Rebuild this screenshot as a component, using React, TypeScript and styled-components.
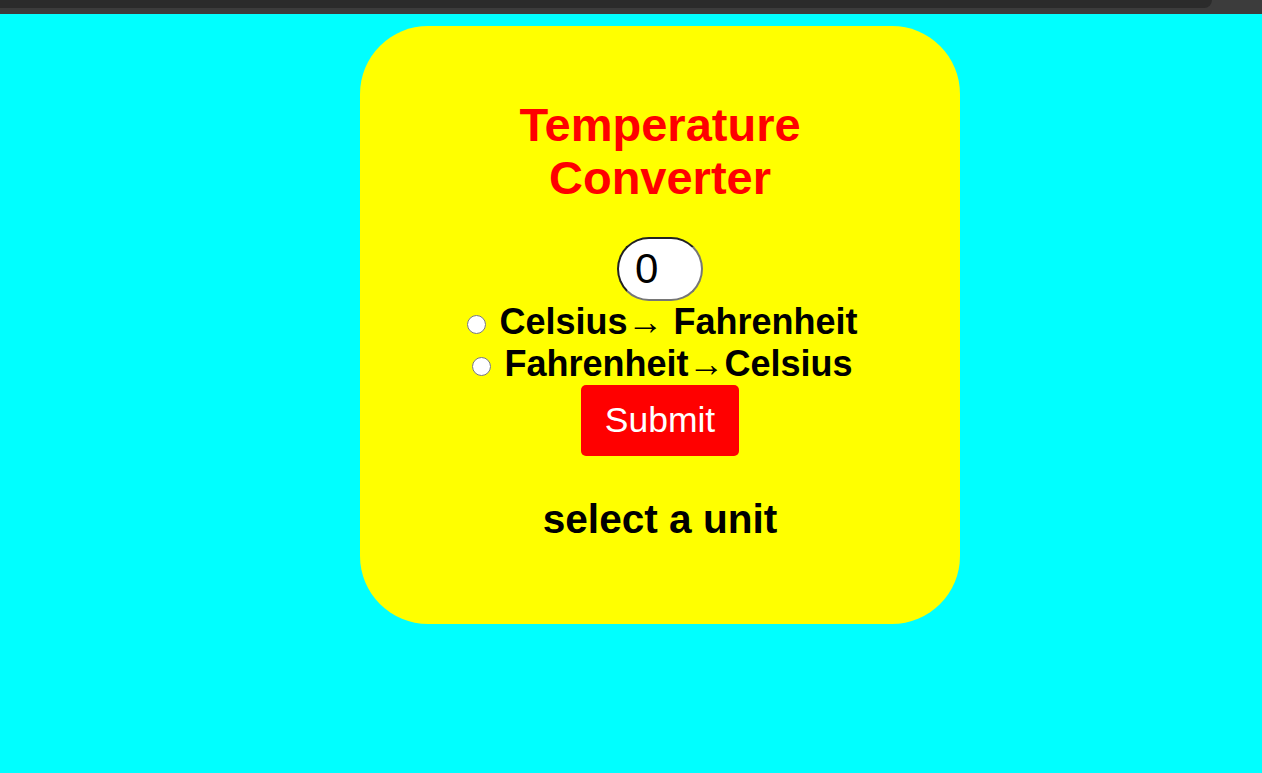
import React, { useState } from "react";
import styled, { createGlobalStyle } from "styled-components";

const GlobalStyle = createGlobalStyle`
  html, body {
    margin: 0;
    padding: 0;
    background: #00ffff;
    font-family: "Liberation Sans", Arial, sans-serif;
  }
`;

export default function App() {
  const [value, setValue] = useState("0");
  const [unit, setUnit] = useState("");

  return (
    <>
      <GlobalStyle />
      <Chrome>
        <ChromeTab />
      </Chrome>
      <Page>
        <Card>
          <Title>Temperature Converter</Title>
          <NumberInput
            type="text"
            value={value}
            onChange={(e) => setValue(e.target.value)}
          />
          <Option>
            <Radio
              type="radio"
              name="unit"
              checked={unit === "cf"}
              onChange={() => setUnit("cf")}
            />{" "}
            Celsius→ Fahrenheit
          </Option>
          <Option>
            <Radio
              type="radio"
              name="unit"
              checked={unit === "fc"}
              onChange={() => setUnit("fc")}
            />{" "}
            Fahrenheit→Celsius
          </Option>
          <SubmitButton type="button">Submit</SubmitButton>
          <Result>select a unit</Result>
        </Card>
      </Page>
    </>
  );
}

const Chrome = styled.div`
  height: 14px;
  background: #3c3c3c;
`;

const ChromeTab = styled.div`
  width: 1212px;
  height: 8px;
  background: #2b2b2b;
  border-bottom-right-radius: 10px;
`;

const Page = styled.main`
  min-height: 759px;
  padding: 12px 0 0 58px;
  box-sizing: border-box;
  display: flex;
  justify-content: center;
  align-items: flex-start;
`;

const Card = styled.section`
  width: 600px;
  padding: 72px 0 82px;
  box-sizing: border-box;
  background: #ffff00;
  border-radius: 68px;
  display: flex;
  flex-direction: column;
  align-items: center;
`;

const Title = styled.h1`
  width: 320px;
  margin: 0 0 33px;
  color: #ff0000;
  font-size: 47px;
  line-height: 53px;
  font-weight: bold;
  text-align: center;
`;

const NumberInput = styled.input`
  width: 86px;
  height: 64px;
  box-sizing: border-box;
  padding: 0 16px;
  border: 2px inset #767676;
  border-radius: 32px;
  background: #ffffff;
  color: #000000;
  font-family: "Liberation Sans", Arial, sans-serif;
  font-size: 42px;
  outline: none;
`;

const Option = styled.label`
  display: block;
  font-size: 36px;
  line-height: 41.5px;
  font-weight: bold;
  color: #000000;
  white-space: nowrap;
`;

const Radio = styled.input`
  width: 19px;
  height: 19px;
  margin: 3px 3px 0 5px;
`;

const SubmitButton = styled.button`
  margin-top: 1px;
  padding: 15px 24px;
  border: none;
  border-radius: 5px;
  background: #ff0000;
  color: #ffffff;
  font-family: "Liberation Sans", Arial, sans-serif;
  font-size: 35.5px;
  line-height: 41px;
  cursor: pointer;
`;

const Result = styled.h2`
  margin: 40px 0 0;
  font-size: 40.6px;
  line-height: 46px;
  font-weight: bold;
  color: #000000;
`;
